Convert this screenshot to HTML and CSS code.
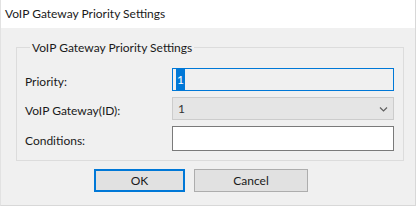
FILE: index.html
```html
<!DOCTYPE html>
<html lang="en">
<head>
  <meta charset="UTF-8">
  <title>VoIP Gateway Priority Settings</title>
  <link rel="stylesheet" href="styles.css">
</head>
<body>
  <div class="dialog">
    <div class="titlebar">VoIP Gateway Priority Settings</div>

    <div class="content">
      <fieldset class="group">
        <legend>VoIP Gateway Priority Settings</legend>

        <div class="form">
          <label>Priority:</label>
          <div class="field focused"><span class="sel">1</span></div>

          <label>VoIP Gateway(ID):</label>
          <div class="field combo">
            <span>1</span>
            <svg class="chev" width="9" height="6" viewBox="0 0 9 6">
              <path d="M1 1.5 L4.5 5 L8 1.5" fill="none" stroke="#606060" stroke-width="1.2"/>
            </svg>
          </div>

          <label>Conditions:</label>
          <div class="field tall"></div>
        </div>
      </fieldset>

      <div class="buttons">
        <button class="btn default">OK</button>
        <button class="btn cancel">Cancel</button>
      </div>
    </div>
  </div>
</body>
</html>
```

FILE: styles.css
```css
body {
  margin: 0;
  background: #fff;
  font-family: 'Lato', 'Noto Sans', sans-serif;
  font-size: 12px;
  color: #1a1a1a;
}

.dialog {
  width: 416px;
  height: 206px;
  background: #f0f0f0;
  border-left: 1px solid #e2e2e2;
  border-right: 1px solid #d8d8d8;
  border-bottom: 1px solid #d8d8d8;
  box-sizing: border-box;
}

.titlebar {
  height: 28px;
  line-height: 28px;
  background: #fff;
  padding-left: 4px;
}

.content {
  padding: 12px 12px 0 15px;
}

.group {
  margin: 0;
  border: 1px solid #dcdcdc;
  padding: 13px 8px 9px 8px;
  width: 388px;
  box-sizing: border-box;
}

.group legend {
  padding: 0 2px;
  margin-left: 5px;
}

.form {
  display: grid;
  grid-template-columns: 147px 222px;
  row-gap: 6px;
  align-items: center;
}

.form label {
  padding-top: 3px;
}

.field {
  height: 23px;
  box-sizing: border-box;
  border: 1px solid #7a7a7a;
  background: #fff;
  display: flex;
  align-items: center;
  padding-left: 3px;
}

.field.tall { height: 25px; }

.field.focused {
  border-color: #0078d7;
  background: #f0f0f0;
}

.sel {
  background: #0078d7;
  color: #fff;
  padding: 1px 1px;
  line-height: 19px;
}

.combo {
  background: #e5e5e5;
  border-color: #cccccc;
  justify-content: space-between;
  padding: 0 5px 0 5px;
  color: #333;
}

.chev { margin-top: 1px; }

.buttons {
  display: flex;
  gap: 9px;
  padding: 8px 0 0 78px;
}

.btn {
  height: 23px;
  background: #e1e1e1;
  border: 1px solid #adadad;
  font-family: inherit;
  font-size: 12px;
  padding: 0;
  color: #1a1a1a;
}

.btn.default {
  width: 91px;
  border: 2px solid #0078d7;
}

.btn.cancel {
  width: 114px;
}
```
